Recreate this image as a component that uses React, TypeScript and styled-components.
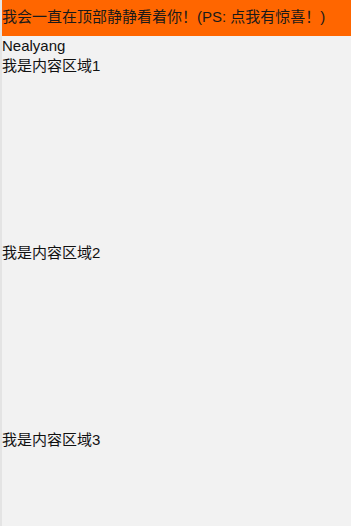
import styled, { createGlobalStyle } from "styled-components";

const GlobalStyle = createGlobalStyle`
  html, body {
    margin: 0;
    padding: 0;
    background: #f2f2f2;
  }

  body {
    font-family: "Liberation Sans", "Noto Sans CJK SC", sans-serif;
    font-size: 15px;
    color: #111;
  }
`;

const Page = styled.div`
  min-height: 526px;
  border-left: 2px solid #e4e4e4;
  background: #f2f2f2;
`;

const StickyBar = styled.header`
  position: sticky;
  top: 0;
  height: 36px;
  line-height: 34px;
  background: #ff6600;
  color: #1a1a1a;
  cursor: pointer;
  white-space: nowrap;
  overflow: hidden;
`;

const Name = styled.div`
  line-height: 20px;
`;

const Block = styled.section`
  height: 187px;
  line-height: 20px;
`;

const sections = ["我是内容区域1", "我是内容区域2", "我是内容区域3"];

const App: React.FC = () => {
  return (
    <>
      <GlobalStyle />
      <Page>
        <StickyBar>我会一直在顶部静静看着你！(PS: 点我有惊喜！)</StickyBar>
        <Name>Nealyang</Name>
        {sections.map((s) => (
          <Block key={s}>{s}</Block>
        ))}
      </Page>
    </>
  );
};

export default App;
